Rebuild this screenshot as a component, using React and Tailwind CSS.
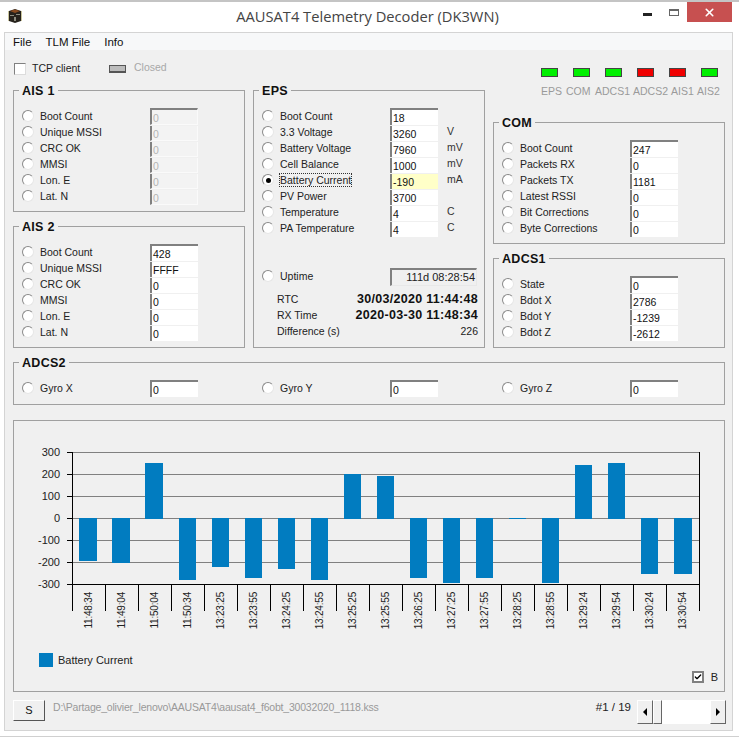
import { X, Check } from 'lucide-react'

const Radio = ({ on }) => (
  <span className="mt-[2px] flex items-center justify-center w-[12px] h-[12px] shrink-0 rounded-full bg-white border border-t-[#8a8a8a] border-l-[#8a8a8a] border-r-[#e6e6e6] border-b-[#e6e6e6]">
    {on && <span className="w-[5px] h-[5px] rounded-full bg-black" />}
  </span>
)

const Field = ({ value, disabled, yellow, first }) => (
  <div
    className={`w-[48px] ${first ? 'h-[17px] border-t-2 border-t-[#808080]' : 'h-[15px] mt-[2px]'} border-l-2 border-l-[#808080] pl-[1px] text-[10.5px] leading-[16px] ${yellow ? 'bg-[#ffffc8]' : disabled ? 'bg-[#f3f3f3] border-r border-b border-r-[#fafafa] border-b-[#fafafa]' : 'bg-white'} ${disabled ? 'text-[#b4b4b4]' : 'text-[#111]'}`}
  >
    {value}
  </div>
)

const Row = ({ label, value, unit, on, disabled, first, yellow, focus }) => (
  <div className="flex items-start h-[16px]">
    <div className="ml-[8px] mr-[6px]"><Radio on={on} /></div>
    <span className="w-[110px] text-[10.5px] leading-[16px] text-[#222] whitespace-nowrap">
      <span className={focus ? 'outline-1 outline-dotted outline-[#333]' : ''}>{label}</span>
    </span>
    <Field value={value} disabled={disabled} first={first} yellow={yellow} />
    {unit && <span className="ml-[9px] text-[10.5px] leading-[14px] text-[#333]">{unit}</span>}
  </div>
)

const Group = ({ title, className, children }) => (
  <div className={`relative border border-[#a0a0a0] ${className}`}>
    <span className="absolute -top-[8px] left-[5px] bg-[#f0f0f0] px-[3px] text-[12.5px] leading-[16px] font-bold tracking-[0.3px] text-[#111]">{title}</span>
    {children}
  </div>
)

const ais1 = ['Boot Count', 'Unique MSSI', 'CRC OK', 'MMSI', 'Lon. E', 'Lat. N']
const ais2 = ['428', 'FFFF', '0', '0', '0', '0']

const eps = [
  ['Boot Count', '18', ''],
  ['3.3 Voltage', '3260', 'V'],
  ['Battery Voltage', '7960', 'mV'],
  ['Cell Balance', '1000', 'mV'],
  ['Battery Current', '-190', 'mA'],
  ['PV Power', '3700', ''],
  ['Temperature', '4', 'C'],
  ['PA Temperature', '4', 'C'],
]

const com = [
  ['Boot Count', '247'],
  ['Packets RX', '0'],
  ['Packets TX', '1181'],
  ['Latest RSSI', '0'],
  ['Bit Corrections', '0'],
  ['Byte Corrections', '0'],
]

const adcs1 = [
  ['State', '0'],
  ['Bdot X', '2786'],
  ['Bdot Y', '-1239'],
  ['Bdot Z', '-2612'],
]

// led colour, label, label cell width
const leds = [
  ['bg-[#00f000]', 'EPS', 'w-[25px]'],
  ['bg-[#00f000]', 'COM', 'w-[29px]'],
  ['bg-[#00f000]', 'ADCS1', 'w-[38px]'],
  ['bg-[#f00000]', 'ADCS2', 'w-[38px]'],
  ['bg-[#f00000]', 'AIS1', 'w-[26px]'],
  ['bg-[#00f000]', 'AIS2', 'w-[24px]'],
]

// time label, bar height in px, up or down
const bars = [
  ['11:48:34', 43, -1], ['11:49:04', 45, -1], ['11:50:04', 55, 1], ['11:50:34', 62, -1],
  ['13:23:25', 49, -1], ['13:23:55', 60, -1], ['13:24:25', 51, -1], ['13:24:55', 62, -1],
  ['13:25:25', 44, 1], ['13:25:55', 42, 1], ['13:26:25', 60, -1], ['13:27:25', 65, -1],
  ['13:27:55', 60, -1], ['13:28:25', 1, -1], ['13:28:55', 65, -1], ['13:29:24', 53, 1],
  ['13:29:54', 55, 1], ['13:30:24', 56, -1], ['13:30:54', 56, -1],
]

const Chart = () => {
  const x0 = 58
  const step = 33
  const zero = 97
  return (
    <svg width="710" height="225" className="block" style={{ fontFamily: '"Liberation Sans"' }}>
      {[300, 200, 100, 0, -100, -200, -300].map((v) => {
        const y = zero - v * 0.22 + 0.5
        return (
          <g key={v}>
            <line x1={x0} x2={x0 + 19 * step} y1={y} y2={y} stroke={v === -300 ? '#000' : '#808080'} />
            <line x1={x0 - 5} x2={x0} y1={y} y2={y} stroke="#000" />
            <text x="46" y={y + 3.5} textAnchor="end" fontSize="11" fill="#222">{v}</text>
          </g>
        )
      })}
      <line x1={x0 + 0.5} x2={x0 + 0.5} y1="31" y2="190" stroke="#000" />
      <line x1={x0 + 19 * step + 0.5} x2={x0 + 19 * step + 0.5} y1="31" y2="190" stroke="#000" />
      {bars.map(([t, h, dir], i) => {
        const bx = x0 + 7 + i * step + (i >= 3 ? 1 : 0)
        const w = i < 3 || i === 18 ? 18 : 17
        return (
          <g key={t}>
            <rect x={bx} y={dir > 0 ? zero - h : zero} width={w} height={dir > 0 ? h + 1 : h} fill="#017cc0" />
            {i < 18 && <line x1={x0 + (i + 1) * step + 0.5} x2={x0 + (i + 1) * step + 0.5} y1="163" y2="190" stroke="#000" />}
            <text
              transform={`translate(${x0 + i * step + 20} 171) rotate(-90)`}
              textAnchor="end"
              fontSize="10"
              letterSpacing="-0.2"
              fill="#222"
            >
              {t}
            </text>
          </g>
        )
      })}
    </svg>
  )
}

export default function App() {
  return (
    <div className="w-[739px] h-[745px] bg-white overflow-hidden text-[#222]" style={{ fontFamily: '"Liberation Sans", sans-serif' }}>
      {/* Title bar */}
      <div className="h-[32px] border-t-2 border-t-[#c4c4c4] flex items-start">
        <div className="flex-1">
          <svg width="16" height="16" viewBox="0 0 16 16" className="ml-[7px] mt-[6px]">
            <path d="M2 3l6-2 6 2v10l-6 2-6-2z" fill="#26221c" />
            <path d="M3 3l5-1.5L13 3 8 5z" fill="#8a4a1e" />
            <path d="M3 7h4v1H3zM9 6h4v1H9zM7 9h2v4H7z" fill="#8d8d80" />
            <path d="M1 3h1v10H1zM14 3h1v10h-1z" fill="#c9c49c" />
          </svg>
        </div>
        <span className="mt-[4px] pl-[3px] text-[14.7px] leading-[20px] text-[#444] whitespace-nowrap" style={{ fontFamily: '"Open Sans", sans-serif' }}>AAUSAT4 Telemetry Decoder (DK3WN)</span>
        <div className="flex-1 flex justify-end items-start mr-[7px]">
          <div className="w-[9px] h-[3px] bg-[#222] mt-[11px] mr-[17px]" />
          <div className="w-[10px] h-[7px] border border-[#666] border-t-2 mt-[7px] mr-[8px]" />
          <div className="w-[45px] h-[20px] bg-[#c75050] flex items-center justify-center">
            <X size={13} strokeWidth={3} className="text-white" />
          </div>
        </div>
      </div>

      <div className="ml-[4px] w-[729px] h-[699px] bg-[#f0f0f0] border border-[#d4d4d4]">
        {/* Menu */}
        <div className="h-[17px] bg-[#f7f8f9] flex items-center pl-[8px] gap-[14px] text-[11.5px] leading-[16px] text-[#111]">
          <span>File</span>
          <span>TLM File</span>
          <span>Info</span>
        </div>

        <div className="pl-[8px] pr-[7px]">
          {/* Top strip */}
          <div className="h-[40px] flex items-start">
            <div className="mt-[13px] ml-[1px] w-[12px] h-[12px] bg-white border border-t-[#808080] border-l-[#808080] border-r-[#dcdcdc] border-b-[#dcdcdc]" />
            <span className="mt-[10px] ml-[6px] w-[77px] text-[10.5px] leading-[16px] text-[#222]">TCP client</span>
            <div className="mt-[15px] w-[17px] h-[8px] bg-[#bcbcbc] border border-[#555] border-b-2" />
            <span className="mt-[9px] ml-[8px] text-[10.5px] leading-[16px] text-[#a8a8a8]">Closed</span>
            <div className="ml-auto mr-[7px] mt-[18px] w-[177px]">
              <div className="flex gap-[15px]">
                {leds.map(([c, n]) => (
                  <div key={n} className={`w-[17px] h-[9px] border border-[#444] ${c}`} />
                ))}
              </div>
              <div className="flex mt-[7px]">
                {leds.map(([, n, w]) => (
                  <span key={n} className={`${w} shrink-0 text-[10.5px] leading-[14px] text-[#9a9a9a] whitespace-nowrap`}>{n}</span>
                ))}
              </div>
            </div>
          </div>

          {/* Panels */}
          <div className="flex gap-[8px]">
            <div className="w-[232px] flex flex-col gap-[14px]">
              <Group title="AIS 1" className="h-[122px] pt-[17px]">
                {ais1.map((l, i) => (
                  <Row key={l} label={l} value="0" disabled first={i === 0} />
                ))}
              </Group>
              <Group title="AIS 2" className="h-[122px] pt-[17px]">
                {ais1.map((l, i) => (
                  <Row key={l} label={l} value={ais2[i]} first={i === 0} />
                ))}
              </Group>
            </div>

            <Group title="EPS" className="w-[232px] h-[258px] pt-[17px]">
              {eps.map(([l, v, u], i) => (
                <Row key={l} label={l} value={v} unit={u} first={i === 0} on={i === 4} focus={i === 4} yellow={i === 4} />
              ))}
              <div className="mt-[32px] flex items-start h-[16px]">
                <div className="ml-[8px] mr-[6px]"><Radio /></div>
                <span className="w-[110px] text-[10.5px] leading-[16px]">Uptime</span>
                <div className="w-[87px] h-[18px] border border-t-2 border-l-2 border-[#808080] border-r-[#e8e8e8] border-b-[#e8e8e8] bg-[#f0f0f0] text-right pr-[1px] text-[11px] leading-[15px]">111d 08:28:54</div>
              </div>
              <div className="pl-[23px] pr-[6px] mt-[7px] text-[10.5px] leading-[16px]">
                <div className="flex justify-between"><span>RTC</span><span className="font-bold text-[12.5px] tracking-[0.3px] text-[#111]">30/03/2020 11:44:48</span></div>
                <div className="flex justify-between"><span>RX Time</span><span className="font-bold text-[12.5px] tracking-[0.3px] text-[#111]">2020-03-30 11:48:34</span></div>
                <div className="flex justify-between"><span>Difference (s)</span><span>226</span></div>
              </div>
            </Group>

            <div className="w-[232px] pt-[32px] flex flex-col gap-[14px]">
              <Group title="COM" className="h-[122px] pt-[17px]">
                {com.map(([l, v], i) => (
                  <Row key={l} label={l} value={v} first={i === 0} />
                ))}
              </Group>
              <Group title="ADCS1" className="h-[90px] pt-[17px]">
                {adcs1.map(([l, v], i) => (
                  <Row key={l} label={l} value={v} first={i === 0} />
                ))}
              </Group>
            </div>
          </div>

          {/* ADCS2 */}
          <Group title="ADCS2" className="mt-[14px] h-[43px] pt-[17px] flex">
            {['Gyro X', 'Gyro Y', 'Gyro Z'].map((l, i) => (
              <div key={l} className={i === 2 ? 'flex-1' : 'w-[240px] shrink-0'}>
                <Row label={l} value="0" first />
              </div>
            ))}
          </Group>

          {/* Chart */}
          <div className="mt-[15px] h-[272px] border border-[#a0a0a0]">
            <Chart />
            <div className="flex items-center ml-[25px] mt-[7px]">
              <div className="w-[14px] h-[14px] bg-[#017cc0]" />
              <span className="ml-[5px] text-[11px] leading-[14px] text-[#222]">Battery Current</span>
            </div>
            <div className="flex justify-end items-center pr-[6px] mt-[4px]">
              <div className="w-[12px] h-[12px] bg-white border-2 border-[#808080] flex items-center justify-center">
                <Check size={10} strokeWidth={4} className="text-black" />
              </div>
              <span className="ml-[7px] text-[11px] leading-[12px]">B</span>
            </div>
          </div>

          {/* Bottom bar */}
          <div className="flex items-start mt-[8px]">
            <div className="w-[32px] h-[21px] bg-[#f0f0f0] border border-white border-r-[#555] border-b-[#555] text-center text-[11px] leading-[19px] text-[#111]">S</div>
            <span className="ml-[8px] -mt-[1px] whitespace-nowrap text-[10.5px] tracking-[-0.2px] leading-[16px] text-[#999]">D:\Partage_olivier_lenovo\AAUSAT4\aausat4_f6obt_30032020_1118.kss</span>
            <span className="ml-auto -mt-[1px] text-[11.5px] leading-[16px] text-[#222]">#1 / 19</span>
            <div className="ml-[6px] -mr-[1px] flex w-[89px] h-[24px] bg-white shrink-0">
              <div className="w-[16px] h-full bg-[#f0f0f0] border border-white border-r-[#666] border-b-[#666] flex items-center justify-center">
                <span className="w-0 h-0 border-y-[4px] border-y-transparent border-r-[4px] border-r-black" />
              </div>
              <div className="w-[9px] h-full bg-[#f0f0f0] border border-white border-r-[#666] border-b-[#666]" />
              <div className="flex-1 bg-white" />
              <div className="w-[16px] h-full bg-[#f0f0f0] border border-white border-r-[#666] border-b-[#666] flex items-center justify-center">
                <span className="w-0 h-0 border-y-[4px] border-y-transparent border-l-[4px] border-l-black" />
              </div>
            </div>
          </div>
        </div>
      </div>
      <div className="h-[6px] border-b border-[#d0d0d0]" />
    </div>
  )
}
